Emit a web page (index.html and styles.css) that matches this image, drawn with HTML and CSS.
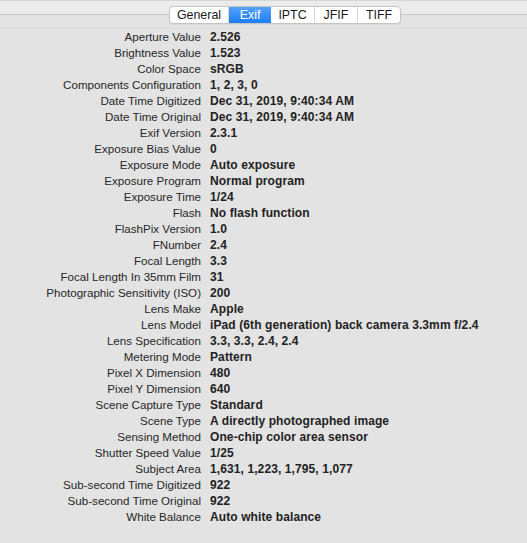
FILE: index.html
```html
<!DOCTYPE html>
<html>
<head>
<meta charset="utf-8">
<link rel="stylesheet" href="styles.css">
</head>
<body>
<div class="window">
  <div class="top-band"></div>
  <div class="tab-row">
    <div class="tabs">
      <div class="tab w-general">General</div>
      <div class="tab w-exif active">Exif</div>
      <div class="tab w-iptc">IPTC</div>
      <div class="tab w-jfif">JFIF</div>
      <div class="tab w-tiff last">TIFF</div>
    </div>
  </div>
  <div class="rows">
    <div class="row"><span class="k">Aperture Value</span><span class="v">2.526</span></div>
    <div class="row"><span class="k">Brightness Value</span><span class="v">1.523</span></div>
    <div class="row"><span class="k">Color Space</span><span class="v">sRGB</span></div>
    <div class="row"><span class="k">Components Configuration</span><span class="v">1, 2, 3, 0</span></div>
    <div class="row"><span class="k">Date Time Digitized</span><span class="v">Dec 31, 2019, 9:40:34 AM</span></div>
    <div class="row"><span class="k">Date Time Original</span><span class="v">Dec 31, 2019, 9:40:34 AM</span></div>
    <div class="row"><span class="k">Exif Version</span><span class="v">2.3.1</span></div>
    <div class="row"><span class="k">Exposure Bias Value</span><span class="v">0</span></div>
    <div class="row"><span class="k">Exposure Mode</span><span class="v">Auto exposure</span></div>
    <div class="row"><span class="k">Exposure Program</span><span class="v">Normal program</span></div>
    <div class="row"><span class="k">Exposure Time</span><span class="v">1/24</span></div>
    <div class="row"><span class="k">Flash</span><span class="v">No flash function</span></div>
    <div class="row"><span class="k">FlashPix Version</span><span class="v">1.0</span></div>
    <div class="row"><span class="k">FNumber</span><span class="v">2.4</span></div>
    <div class="row"><span class="k">Focal Length</span><span class="v">3.3</span></div>
    <div class="row"><span class="k">Focal Length In 35mm Film</span><span class="v">31</span></div>
    <div class="row"><span class="k">Photographic Sensitivity (ISO)</span><span class="v">200</span></div>
    <div class="row"><span class="k">Lens Make</span><span class="v">Apple</span></div>
    <div class="row"><span class="k">Lens Model</span><span class="v">iPad (6th generation) back camera 3.3mm f/2.4</span></div>
    <div class="row"><span class="k">Lens Specification</span><span class="v">3.3, 3.3, 2.4, 2.4</span></div>
    <div class="row"><span class="k">Metering Mode</span><span class="v">Pattern</span></div>
    <div class="row"><span class="k">Pixel X Dimension</span><span class="v">480</span></div>
    <div class="row"><span class="k">Pixel Y Dimension</span><span class="v">640</span></div>
    <div class="row"><span class="k">Scene Capture Type</span><span class="v">Standard</span></div>
    <div class="row"><span class="k">Scene Type</span><span class="v">A directly photographed image</span></div>
    <div class="row"><span class="k">Sensing Method</span><span class="v">One-chip color area sensor</span></div>
    <div class="row"><span class="k">Shutter Speed Value</span><span class="v">1/25</span></div>
    <div class="row"><span class="k">Subject Area</span><span class="v">1,631, 1,223, 1,795, 1,077</span></div>
    <div class="row"><span class="k">Sub-second Time Digitized</span><span class="v">922</span></div>
    <div class="row"><span class="k">Sub-second Time Original</span><span class="v">922</span></div>
    <div class="row"><span class="k">White Balance</span><span class="v">Auto white balance</span></div>
  </div>
</div>
</body>
</html>
```
FILE: styles.css
```css
html, body {
  margin: 0;
  padding: 0;
  background: #e3e3e3;
}
.window {
  width: 527px;
  height: 543px;
  background: #e3e3e3;
  font-family: "Liberation Sans", Arial, sans-serif;
  color: #222;
  overflow: hidden;
}
.top-band {
  background: #ebebeb;
  border-top: 1px solid #d6d6d6;
  border-bottom: 1px solid #c9c9c9;
  box-sizing: border-box;
  height: 15px;
}
.tab-row {
  height: 13px;
  border-bottom: 1px solid #dadada;
  display: flex;
  padding-left: 169px;
}
.tabs {
  display: flex;
  margin-top: -9px;
  height: 18px;
  box-sizing: border-box;
  border: 1px solid #c4c4c4;
  border-radius: 4px;
  background: #fff;
  overflow: hidden;
  box-shadow: 0 1px 0 rgba(0,0,0,0.04);
}
.tab {
  font-size: 12.4px;
  line-height: 16px;
  text-align: center;
  color: #1a1a1a;
  border-right: 1px solid #d8d8d8;
  box-sizing: border-box;
}
.tab.last { border-right: none; }
.tab.active {
  background: linear-gradient(#55a3fb, #1a7df4);
  color: #fff;
  border-right: none;
}
.w-general { width: 59px; }
.w-exif { width: 42px; }
.w-iptc { width: 44px; }
.w-jfif { width: 43px; }
.w-tiff { width: 42px; }
.rows {
  display: flex;
  flex-direction: column;
}
.row {
  display: flex;
  height: 16px;
  line-height: 16px;
  align-items: center;
}
.k {
  width: 201px;
  text-align: right;
  font-size: 11.6px;
  color: #262626;
  white-space: nowrap;
}
.v {
  margin-left: 9px;
  font-size: 12px;
  letter-spacing: 0.1px;
  font-weight: bold;
  color: #222;
  white-space: nowrap;
}
```
